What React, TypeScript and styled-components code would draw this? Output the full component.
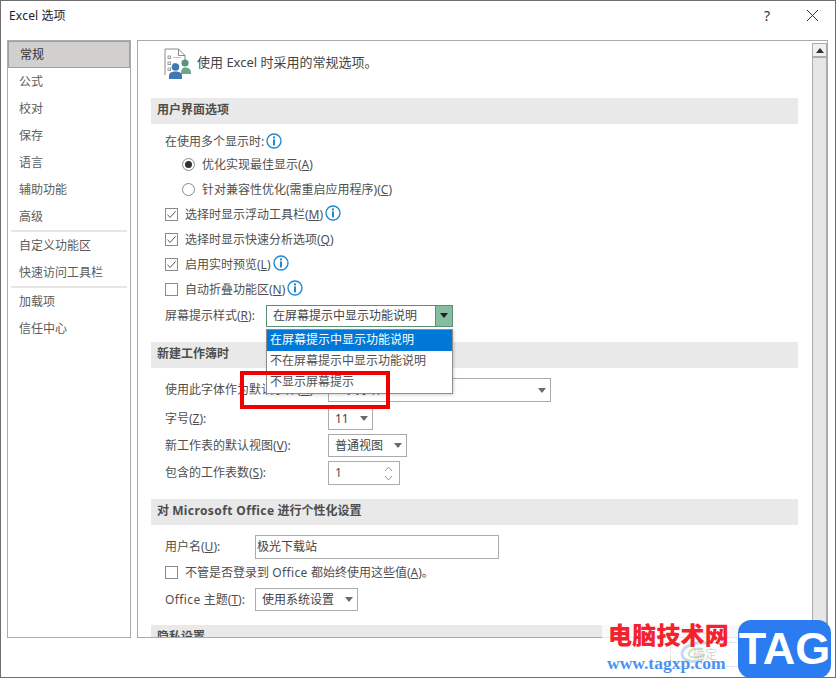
import React from "react";
import styled, { createGlobalStyle } from "styled-components";

const Global = createGlobalStyle`
  html, body { margin: 0; padding: 0; background: #fff; }
  * { box-sizing: border-box; }
  u { text-underline-offset: 1px; text-decoration-thickness: 1px; }
`;

const Dialog = styled.div`
  position: relative;
  width: 836px;
  height: 678px;
  background: #fff;
  border: 1px solid #6e6e6e;
  display: flex;
  flex-direction: column;
  overflow: hidden;
  font-family: "Noto Sans", "Noto Sans CJK SC", sans-serif;
  font-size: 12px;
  line-height: 16px;
  color: #4f4f4f;
`;
const TitleBar = styled.div`
  height: 39px;
  flex: none;
  display: flex;
  align-items: center;
  padding: 0 15px 10px 8px;
  color: #222;
  font-size: 12px;
`;
const TitleText = styled.div`flex: 1;`;
const TitleButton = styled.div`
  width: 16px;
  margin-left: 29px;
  display: flex;
  justify-content: center;
  font-size: 14px;
  color: #333;
`;
const Body = styled.div`
  flex: none;
  height: 598px;
  display: flex;
  gap: 6px;
  padding: 0 7px 0 6px;
`;
const Nav = styled.div`
  width: 124px;
  flex: none;
  border: 1px solid #ababab;
  display: flex;
  flex-direction: column;
`;
const NavItem = styled.div<{ $active?: boolean }>`
  height: 27px;
  flex: none;
  display: flex;
  align-items: center;
  padding-left: 11px;
  color: ${(p) => (p.$active ? "#333" : "#5c5c5c")};
  background: ${(p) => (p.$active ? "#d2d0ce" : "transparent")};
  border: ${(p) => (p.$active ? "1px solid #a0a0a0" : "none")};
`;
const NavSep = styled.div`
  height: 2px;
  flex: none;
  margin: 0 3px 0 3px;
  background: #e6e6e6;
`;
const Panel = styled.div`
  flex: 1;
  min-width: 0;
  border: 1px solid #ababab;
  display: flex;
  overflow: hidden;
`;
const Scroller = styled.div`
  flex: 1;
  min-width: 0;
  padding: 0 14px 0 13px;
  overflow: hidden;
`;
const Scrollbar = styled.div`
  width: 15px;
  flex: none;
  margin: 2px 0 0 0;
  border-left: 1px solid #ababab;
  border-right: 1px solid #ababab;
  background: #e6e6e6;
`;
const ScrollUp = styled.div`
  height: 15px;
  background: #f0f0f0;
  border: 1px solid #ababab;
  border-bottom-width: 2px;
  margin: 0 -1px;
  display: flex;
  align-items: center;
  justify-content: center;
`;
const PageHead = styled.div`
  height: 57px;
  display: flex;
  align-items: flex-start;
  gap: 5px;
  padding: 7px 0 0 13px;
  font-size: 13px;
  color: #444;
`;
const PageHeadText = styled.div`
  line-height: 28px;
`;
const SectionHead = styled.div`
  height: 26px;
  background: #e9e9e9;
  display: flex;
  align-items: center;
  padding-left: 6px;
  padding-bottom: 2px;
  font-weight: 700;
  color: #4d4d4d;
  flex: none;
  white-space: pre;
`;
const Latin = styled.span<{ $s?: number }>`
  letter-spacing: ${(p) => p.$s ?? 0.4}px;
`;
const Group = styled.div<{ $top: number; $bottom: number }>`
  padding: ${(p) => p.$top}px 0 ${(p) => p.$bottom}px 14px;
  display: flex;
  flex-direction: column;
`;
const Row = styled.div<{ $h: number; $indent?: number; $mt?: number }>`
  height: ${(p) => p.$h}px;
  margin-top: ${(p) => p.$mt ?? 0}px;
  padding-left: ${(p) => p.$indent ?? 0}px;
  display: flex;
  align-items: center;
  white-space: pre;
  flex: none;
`;
const Label = styled.div<{ $w: number }>`
  width: ${(p) => p.$w}px;
  flex: none;
`;
const Check = styled.span`
  width: 13px;
  height: 13px;
  flex: none;
  border: 1px solid #8a8a8a;
  margin-right: 7px;
  display: inline-flex;
  align-items: center;
  justify-content: center;
  background: #fff;
`;
const Radio = styled.span`
  width: 13px;
  height: 13px;
  flex: none;
  border: 1px solid #8a8a8a;
  border-radius: 50%;
  margin-right: 7px;
  display: inline-flex;
  align-items: center;
  justify-content: center;
`;
const RadioDot = styled.span`
  width: 7px;
  height: 7px;
  border-radius: 50%;
  background: #333;
`;
const InfoWrap = styled.span`
  display: inline-flex;
  margin-left: 2px;
  margin-top: -3px;
`;
const SelectBox = styled.div<{ $w: number; $h: number }>`
  width: ${(p) => p.$w}px;
  height: ${(p) => p.$h}px;
  border: 1px solid #ababab;
  background: #fff;
  display: flex;
  align-items: center;
  padding: 0 4px 0 6px;
  color: #444;
  flex: none;
`;
const SelectValue = styled.div`flex: 1;overflow: hidden;`;
const Caret = styled.span<{ $dark?: boolean }>`
  width: 0;
  height: 0;
  flex: none;
  border-left: 4px solid transparent;
  border-right: 4px solid transparent;
  border-top: 5px solid ${(p) => (p.$dark ? "#222" : "#6a6a6a")};
`;
const CaretUp = styled.span`
  width: 0;
  height: 0;
  border-left: 4px solid transparent;
  border-right: 4px solid transparent;
  border-bottom: 5px solid #333;
`;
const ActiveSelect = styled.div`
  width: 187px;
  height: 22px;
  border: 1px solid #5b8f73;
  display: flex;
  background: #fff;
  flex: none;
`;
const ActiveValue = styled.div`
  flex: 1;
  padding-left: 6px;
  display: flex;
  align-items: center;
  color: #444;
`;
const ActiveArrow = styled.div`
  width: 17px;
  background: #86bd9f;
  border-left: 1px solid #5b8f73;
  display: flex;
  align-items: center;
  justify-content: center;
`;
const Popup = styled.div`
  position: absolute;
  left: 265px;
  top: 328px;
  width: 187px;
  height: 65px;
  background: #fff;
  border: 1px solid #8d8d8d;
  box-shadow: 1px 1px 3px rgba(0, 0, 0, 0.18);
`;
const PopupItem = styled.div<{ $sel?: boolean }>`
  height: 21px;
  padding-left: 3px;
  padding-bottom: 2px;
  display: flex;
  align-items: center;
  color: ${(p) => (p.$sel ? "#fff" : "#4f4f4f")};
  background: ${(p) => (p.$sel ? "#0078d7" : "transparent")};
`;
const RedBox = styled.div`
  position: absolute;
  left: 239px;
  top: 370px;
  width: 150px;
  height: 38px;
  border: 4px solid #f00000;
`;
const Spin = styled.div`
  width: 72px;
  height: 24px;
  border: 1px solid #ababab;
  display: flex;
  align-items: center;
  padding: 0 6px 0 6px;
  flex: none;
`;
const SpinArrows = styled.div`
  display: flex;
  flex-direction: column;
  gap: 3px;
`;
const TextInput = styled.div`
  width: 244px;
  height: 24px;
  border: 1px solid #ababab;
  padding-left: 1px;
  display: flex;
  align-items: center;
  color: #444;
  flex: none;
`;
const Footer = styled.div`
  flex: 1;
  display: flex;
  justify-content: flex-end;
  gap: 6px;
  padding: 4px 7px 0 0;
`;
const FooterButton = styled.div<{ $w: number }>`
  width: ${(p) => p.$w}px;
  height: 25px;
  border: 1px solid #ababab;
  display: flex;
  align-items: center;
  justify-content: center;
  color: #666;
`;
const WatermarkVeil = styled.div`
  position: absolute;
  left: 601px;
  top: 623px;
  width: 233px;
  height: 53px;
  background: rgba(255, 255, 255, 0.72);
`;
const WatermarkSwirl = styled.svg`
  position: absolute;
  left: 678px;
  top: 640px;
`;
const WatermarkRed = styled.div`
  position: absolute;
  left: 607px;
  top: 619px;
  font-size: 24px;
  line-height: 30px;
  font-weight: 900;
  letter-spacing: 0.2px;
  color: #f4222d;
  white-space: nowrap;
`;
const WatermarkUrl = styled.div`
  position: absolute;
  left: 606px;
  top: 652px;
  font-family: "Liberation Serif", serif;
  font-size: 17.5px;
  line-height: 20px;
  font-weight: 700;
  color: #4a92f2;
  white-space: nowrap;
`;
const TagBadge = styled.div`
  position: absolute;
  left: 737px;
  top: 619px;
  width: 93px;
  height: 58px;
  border-radius: 13px;
  background: #2a7cf0;
  color: #fff;
  display: flex;
  align-items: center;
  justify-content: center;
  font-family: "Liberation Sans", sans-serif;
  font-size: 45px;
  font-weight: 700;
`;

const Info = () => (
  <InfoWrap>
    <svg width="16" height="16" viewBox="0 0 16 16">
      <circle cx="8" cy="8" r="7" fill="#fff" stroke="#1f8ad0" strokeWidth="1.4" />
      <rect x="7" y="3.4" width="2" height="2" fill="#1f8ad0" />
      <rect x="7" y="6.4" width="2" height="6" fill="#1f8ad0" />
    </svg>
  </InfoWrap>
);

const Tick = () => (
  <svg width="11" height="11" viewBox="0 0 11 11">
    <path d="M1.5 5.8 L4.2 8.4 L9.6 2.4" fill="none" stroke="#555" strokeWidth="1" />
  </svg>
);

const PageIcon = () => (
  <svg width="28" height="32" viewBox="0 0 28 32">
    <path d="M1 27 V1 H14.5 L21 7.5 V12" fill="none" stroke="#8a8a8a" strokeWidth="1" />
    <path d="M14.5 1 V7.5 H21" fill="none" stroke="#8a8a8a" strokeWidth="1" />
    <rect x="4" y="8" width="2.6" height="2.6" fill="none" stroke="#8a8a8a" strokeWidth="0.8" />
    <rect x="4" y="14" width="2.6" height="2.6" fill="none" stroke="#8a8a8a" strokeWidth="0.8" />
    <rect x="4" y="20" width="2.6" height="2.6" fill="none" stroke="#8a8a8a" strokeWidth="0.8" />
    <path d="M9 9.5 H17 M9 15.5 H12" stroke="#b0b0b0" strokeWidth="0.8" />
    <circle cx="21" cy="15" r="3.6" fill="#57967a" />
    <path d="M17 26 C17 20.5 19 19.6 21 19.6 C24.5 19.6 27 21 27 25.5 V26 Z" fill="#68a78b" />
    <circle cx="11.5" cy="19" r="3.8" fill="#3f79b5" />
    <path d="M5 31 V28 C5 24.6 8 23.6 11.5 23.6 C15 23.6 18 24.6 18 28 V31 Z" fill="#3f79b5" />
  </svg>
);

const CloseIcon = () => (
  <svg width="13" height="13" viewBox="0 0 13 13">
    <path d="M1 1 L12 12 M12 1 L1 12" stroke="#333" strokeWidth="1" />
  </svg>
);

const Chevron = ({ up }: { up?: boolean }) => (
  <svg width="9" height="6" viewBox="0 0 9 6">
    <path d={up ? "M1 5 L4.5 1 L8 5" : "M1 1 L4.5 5 L8 1"} fill="none" stroke="#9a9a9a" strokeWidth="1" />
  </svg>
);

export default function App() {
  return (
    <>
      <Global />
      <Dialog>
        <TitleBar>
          <TitleText>
            <Latin $s={0.2}>Excel</Latin> 选项
          </TitleText>
          <TitleButton>?</TitleButton>
          <TitleButton>
            <CloseIcon />
          </TitleButton>
        </TitleBar>
        <Body>
          <Nav>
            <NavItem $active>常规</NavItem>
            <NavItem>公式</NavItem>
            <NavItem>校对</NavItem>
            <NavItem>保存</NavItem>
            <NavItem>语言</NavItem>
            <NavItem>辅助功能</NavItem>
            <NavItem>高级</NavItem>
            <NavSep />
            <NavItem>自定义功能区</NavItem>
            <NavItem>快速访问工具栏</NavItem>
            <NavSep />
            <NavItem>加载项</NavItem>
            <NavItem>信任中心</NavItem>
          </Nav>
          <Panel>
            <Scroller>
              <PageHead>
                <PageIcon />
                <PageHeadText>使用 Excel 时采用的常规选项。</PageHeadText>
              </PageHead>
              <SectionHead>用户界面选项</SectionHead>
              <Group $top={7} $bottom={13}>
                <Row $h={22}>
                  在使用多个显示时:
                  <Info />
                </Row>
                <Row $h={23} $indent={17}>
                  <Radio>
                    <RadioDot />
                  </Radio>
                  优化实现最佳显示(<u>A</u>)
                </Row>
                <Row $h={25} $indent={17} $mt={1}>
                  <Radio />
                  针对兼容性优化(需重启应用程序)(<u>C</u>)
                </Row>
                <Row $h={25}>
                  <Check>
                    <Tick />
                  </Check>
                  选择时显示浮动工具栏(<u>M</u>)
                  <Info />
                </Row>
                <Row $h={25}>
                  <Check>
                    <Tick />
                  </Check>
                  选择时显示快速分析选项(<u>Q</u>)
                </Row>
                <Row $h={25}>
                  <Check>
                    <Tick />
                  </Check>
                  启用实时预览(<u>L</u>)
                  <Info />
                </Row>
                <Row $h={25}>
                  <Check />
                  自动折叠功能区(<u>N</u>)
                  <Info />
                </Row>
                <Row $h={27}>
                  <Label $w={101}>
                    屏幕提示样式(<u>R</u>):
                  </Label>
                  <ActiveSelect>
                    <ActiveValue>在屏幕提示中显示功能说明</ActiveValue>
                    <ActiveArrow>
                      <Caret $dark />
                    </ActiveArrow>
                  </ActiveSelect>
                </Row>
              </Group>
              <SectionHead>新建工作簿时</SectionHead>
              <Group $top={10} $bottom={14}>
                <Row $h={24}>
                  <Label $w={163}>
                    使用此字体作为默认字体(<u>N</u>):
                  </Label>
                  <SelectBox $w={223} $h={24}>
                    <SelectValue>正文字体</SelectValue>
                    <Caret />
                  </SelectBox>
                </Row>
                <Row $h={23} $mt={5}>
                  <Label $w={163}>
                    字号(<u>Z</u>):
                  </Label>
                  <SelectBox $w={45} $h={23}>
                    <SelectValue>11</SelectValue>
                    <Caret />
                  </SelectBox>
                </Row>
                <Row $h={23} $mt={4}>
                  <Label $w={163}>
                    新工作表的默认视图(<u>V</u>):
                  </Label>
                  <SelectBox $w={79} $h={23}>
                    <SelectValue>普通视图</SelectValue>
                    <Caret />
                  </SelectBox>
                </Row>
                <Row $h={24} $mt={4}>
                  <Label $w={163}>
                    包含的工作表数(<u>S</u>):
                  </Label>
                  <Spin>
                    <SelectValue>1</SelectValue>
                    <SpinArrows>
                      <Chevron up />
                      <Chevron />
                    </SpinArrows>
                  </Spin>
                </Row>
              </Group>
              <SectionHead>
                对 <Latin>Microsoft Office</Latin> 进行个性化设置
              </SectionHead>
              <Group $top={10} $bottom={14}>
                <Row $h={24}>
                  <Label $w={90}>
                    用户名(<u>U</u>):
                  </Label>
                  <TextInput>极光下载站</TextInput>
                </Row>
                <Row $h={25} $mt={1}>
                  <Check />
                  不管是否登录到 <Latin>Office</Latin> 都始终使用这些值(<u>A</u>)。
                </Row>
                <Row $h={23} $mt={3}>
                  <Label $w={90}>
                    <Latin>Office</Latin> 主题(<u>T</u>):
                  </Label>
                  <SelectBox $w={103} $h={23}>
                    <SelectValue>使用系统设置</SelectValue>
                    <Caret />
                  </SelectBox>
                </Row>
              </Group>
              <SectionHead>隐私设置</SectionHead>
            </Scroller>
            <Scrollbar>
              <ScrollUp>
                <CaretUp />
              </ScrollUp>
            </Scrollbar>
          </Panel>
        </Body>
        <Footer>
          <FooterButton $w={70}>确定</FooterButton>
          <FooterButton $w={82}>取消</FooterButton>
        </Footer>
        <Popup>
          <PopupItem $sel>在屏幕提示中显示功能说明</PopupItem>
          <PopupItem>不在屏幕提示中显示功能说明</PopupItem>
          <PopupItem>不显示屏幕提示</PopupItem>
        </Popup>
        <RedBox />
        <WatermarkVeil />
        <WatermarkSwirl width="34" height="24" viewBox="0 0 34 24">
          <path d="M30 3 C16 -1 3 6 3 13 C3 20 14 22 24 19" fill="none" stroke="#9cc4e4" strokeWidth="3" opacity="0.6" />
          <path d="M24 8 C15 6 9 10 10 14 C11 17 19 17 26 14" fill="none" stroke="#a8d0a0" strokeWidth="2" opacity="0.6" />
        </WatermarkSwirl>
        <WatermarkRed>电脑技术网</WatermarkRed>
        <WatermarkUrl>www.tagxp.com</WatermarkUrl>
        <TagBadge>TAG</TagBadge>
      </Dialog>
    </>
  );
}
